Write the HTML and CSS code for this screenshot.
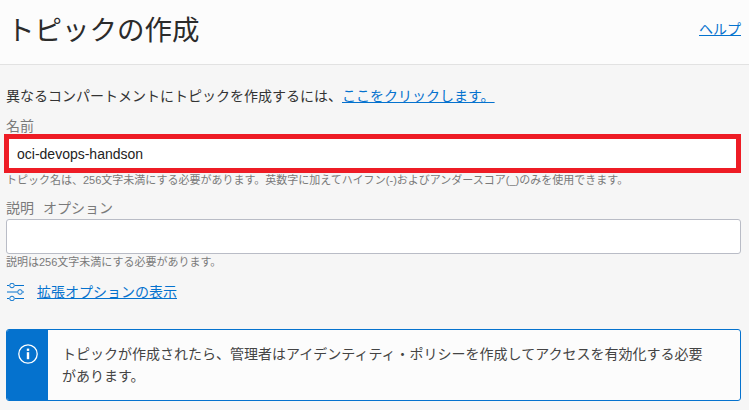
FILE: index.html
```html
<!DOCTYPE html>
<html lang="ja">
<head>
    <meta charset="UTF-8">
    <meta name="viewport" content="width=device-width, initial-scale=1.0">
    <title>トピックの作成</title>
    <link rel="stylesheet" href="styles.css">
</head>
<body>
    <header class="panel-header">
        <h1 class="panel-title">トピックの作成</h1>
        <a class="link help-link" href="#">ヘルプ</a>
    </header>

    <main class="panel-body">
        <p class="compartment-line">異なるコンパートメントにトピックを作成するには、<a class="link" href="#">ここをクリックします。</a></p>

        <div class="field field-name">
            <label class="field-label" for="topicName">名前</label>
            <div class="highlight-box">
                <input class="name-input" id="topicName" type="text" value="oci-devops-handson">
            </div>
            <p class="field-hint">トピック名は、256文字未満にする必要があります。英数字に加えてハイフン(-)およびアンダースコア(_)のみを使用できます。</p>
        </div>

        <div class="field field-desc">
            <label class="field-label" for="topicDesc">説明<span class="optional">オプション</span></label>
            <input class="desc-input" id="topicDesc" type="text">
            <p class="field-hint desc-hint">説明は256文字未満にする必要があります。</p>
        </div>

        <div class="advanced-row">
            <svg class="advanced-icon" width="18" height="18" viewBox="0 0 18 18" fill="none" stroke="#0572ce" stroke-width="1">
                <path d="M0 2.5H2M8 2.5H17"/>
                <circle cx="5" cy="2.5" r="2.3"/>
                <path d="M0 9H10M16 9H17"/>
                <circle cx="13" cy="9" r="2.3"/>
                <path d="M0 15.5H2M8 15.5H17"/>
                <circle cx="5" cy="15.5" r="2.3"/>
            </svg>
            <a class="link advanced-link" href="#">拡張オプションの表示</a>
        </div>

        <div class="info-banner">
            <div class="info-side">
                <svg width="20" height="20" viewBox="0 0 20 20" fill="none">
                    <circle cx="10" cy="10" r="9.2" stroke="#fff" stroke-width="1.3"/>
                    <rect x="8.8" y="8.2" width="2.4" height="7" fill="#fff"/>
                    <rect x="8.8" y="4.6" width="2.4" height="2.3" fill="#fff"/>
                </svg>
            </div>
            <p class="info-text">トピックが作成されたら、管理者はアイデンティティ・ポリシーを作成してアクセスを有効化する必要があります。</p>
        </div>
    </main>
</body>
</html>
```

FILE: styles.css
```css
body {
    margin: 0;
    padding: 0;
    background: #f6f6f6;
    color: #333;
    font-family: "Liberation Sans", "Noto Sans CJK JP", sans-serif;
    font-size: 14px;
    overflow: hidden;
}

.link {
    color: #0572ce;
    text-decoration: underline;
}

.panel-header {
    height: 56px;
    background: #fcfcfc;
    border-bottom: 1px solid #e2e2e2;
    display: flex;
    justify-content: space-between;
    align-items: center;
    padding: 0 8px 8px 7px;
}

.panel-title {
    margin: 0;
    font-size: 27.5px;
    font-weight: 400;
    color: #2b2b2b;
}

.help-link {
    font-size: 14px;
}

.panel-body {
    padding: 0 8px 0 6px;
}

.compartment-line {
    margin: 21px 0 0 0;
    line-height: 20px;
    color: #333;
}

.field-label {
    display: block;
    font-size: 14px;
    line-height: 20px;
    color: #7a7a7a;
}

.field-name {
    margin-top: 10px;
}

.highlight-box {
    margin: -2px 0 0 -2px;
    border: 5px solid #ee1c25;
    height: 29px;
    background: #fff;
}

.name-input {
    display: block;
    width: 100%;
    height: 100%;
    border: none;
    padding: 1px 0 0 8px;
    box-sizing: border-box;
    font: inherit;
    color: #222;
    background: transparent;
}

.field-hint {
    margin: 0;
    font-size: 11px;
    line-height: 15px;
    color: #7a7a7a;
}

.desc-hint {
    margin-top: 1px;
}

.field-desc {
    margin-top: 10px;
}

.optional {
    margin-left: 9px;
}

.desc-input {
    display: block;
    width: 100%;
    height: 35px;
    margin-top: 1px;
    border: 1px solid #b9bcc6;
    border-radius: 3px;
    box-sizing: border-box;
    background: #fff;
}

.advanced-row {
    display: flex;
    align-items: center;
    gap: 12px;
    margin-top: 13px;
    margin-left: 1px;
    height: 18px;
}

.advanced-link {
    margin-bottom: 3px;
}

.info-banner {
    display: flex;
    height: 72px;
    margin-top: 28px;
    border: 1px solid #0572ce;
    border-radius: 3px;
    box-sizing: border-box;
    background: #fcfcfc;
    overflow: hidden;
}

.info-side {
    flex: none;
    width: 41px;
    background: #0572ce;
    display: flex;
    justify-content: center;
    padding-top: 14px;
    box-sizing: border-box;
}

.info-text {
    margin: 13px 0 0 14px;
    width: 650px;
    line-height: 22px;
    color: #444;
}
```
